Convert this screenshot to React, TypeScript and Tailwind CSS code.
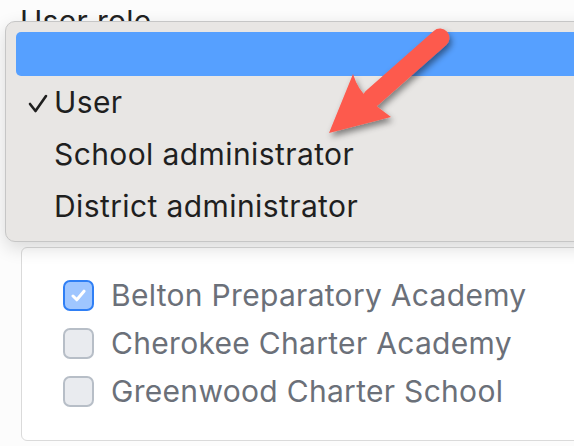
import React from 'react';

const schools = [
  { name: 'Belton Preparatory Academy', checked: true },
  { name: 'Cherokee Charter Academy', checked: false },
  { name: 'Greenwood Charter School', checked: false },
];

const roles = ['User', 'School administrator', 'District administrator'];

const Checkbox: React.FC<{ checked: boolean }> = ({ checked }) =>
  checked ? (
    <span className="w-[31px] h-[31px] shrink-0 rounded-[7px] border-2 border-[#2f7ff5] bg-[#9fc6ff] flex items-center justify-center">
      <svg width="15" height="13" viewBox="0 0 15 13" fill="none">
        <path d="M2 7L5.8 10.8L13 2.2" stroke="#fff" strokeWidth="3" strokeLinecap="round" strokeLinejoin="round" />
      </svg>
    </span>
  ) : (
    <span className="w-[31px] h-[31px] shrink-0 rounded-[7px] border-2 border-[#b7bec7] bg-[#e9ebef]" />
  );

const App: React.FC = () => {
  return (
    <div className="relative w-[574px] h-[446px] overflow-hidden bg-[#fcfcfc] font-['Inter','Liberation_Sans',sans-serif]">
      {/* Label + school list underneath the open menu */}
      <div className="pl-[20px] pt-[3px] text-[30px] leading-[36px] tracking-[0.3px] text-[#222]">User role</div>

      <div className="ml-[21px] mt-[208px] w-[600px] h-[194px] rounded-[6px] border border-[#dadada] bg-white pl-[41px] pt-[32px]">
        <div className="flex flex-col gap-[17px]">
          {schools.map(s => (
            <label key={s.name} className="flex items-center gap-[17px] h-[31px]">
              <Checkbox checked={s.checked} />
              <span className="text-[30px] leading-[31px] tracking-[0.3px] text-[#6b7079]">{s.name}</span>
            </label>
          ))}
        </div>
      </div>

      {/* Open select menu */}
      <div className="absolute left-[5px] top-[21px] w-[600px] h-[221px] rounded-[10px] border border-[#c6c6c6] bg-[#e8e6e4] shadow-[0_6px_18px_rgba(0,0,0,0.14)] pt-[10px] pl-[10px]">
        <div className="h-[44px] rounded-[5px] bg-[#56a0ff]" />
        {roles.map((r, i) => (
          <div key={r} className="relative h-[52px] flex items-center pl-[38px] text-[30px] tracking-[0.4px] text-[#1f1f1f]">
            {i === 0 && (
              <svg className="absolute left-[12px] top-[18px]" width="20" height="19" viewBox="0 0 20 19" fill="none">
                <path d="M2 10L7.5 17L18 2" stroke="#1f1f1f" strokeWidth="2.6" strokeLinecap="round" strokeLinejoin="round" />
              </svg>
            )}
            {r}
          </div>
        ))}
      </div>

      {/* Callout arrow */}
      <svg className="absolute inset-0 pointer-events-none" width="574" height="446" viewBox="0 0 574 446">
        <defs>
          <filter id="arrowShadow" x="-20%" y="-20%" width="140%" height="140%">
            <feDropShadow dx="2" dy="4" stdDeviation="3" floodColor="#000" floodOpacity="0.45" />
          </filter>
        </defs>
        <g filter="url(#arrowShadow)" fill="#fd5a4d">
          <path d="M440 38L372 98" stroke="#fd5a4d" strokeWidth="19" strokeLinecap="round" />
          <path d="M329 133L353 74Q358 90 368 98Q378 108 391 117Z" />
        </g>
      </svg>
    </div>
  );
};

export default App;
